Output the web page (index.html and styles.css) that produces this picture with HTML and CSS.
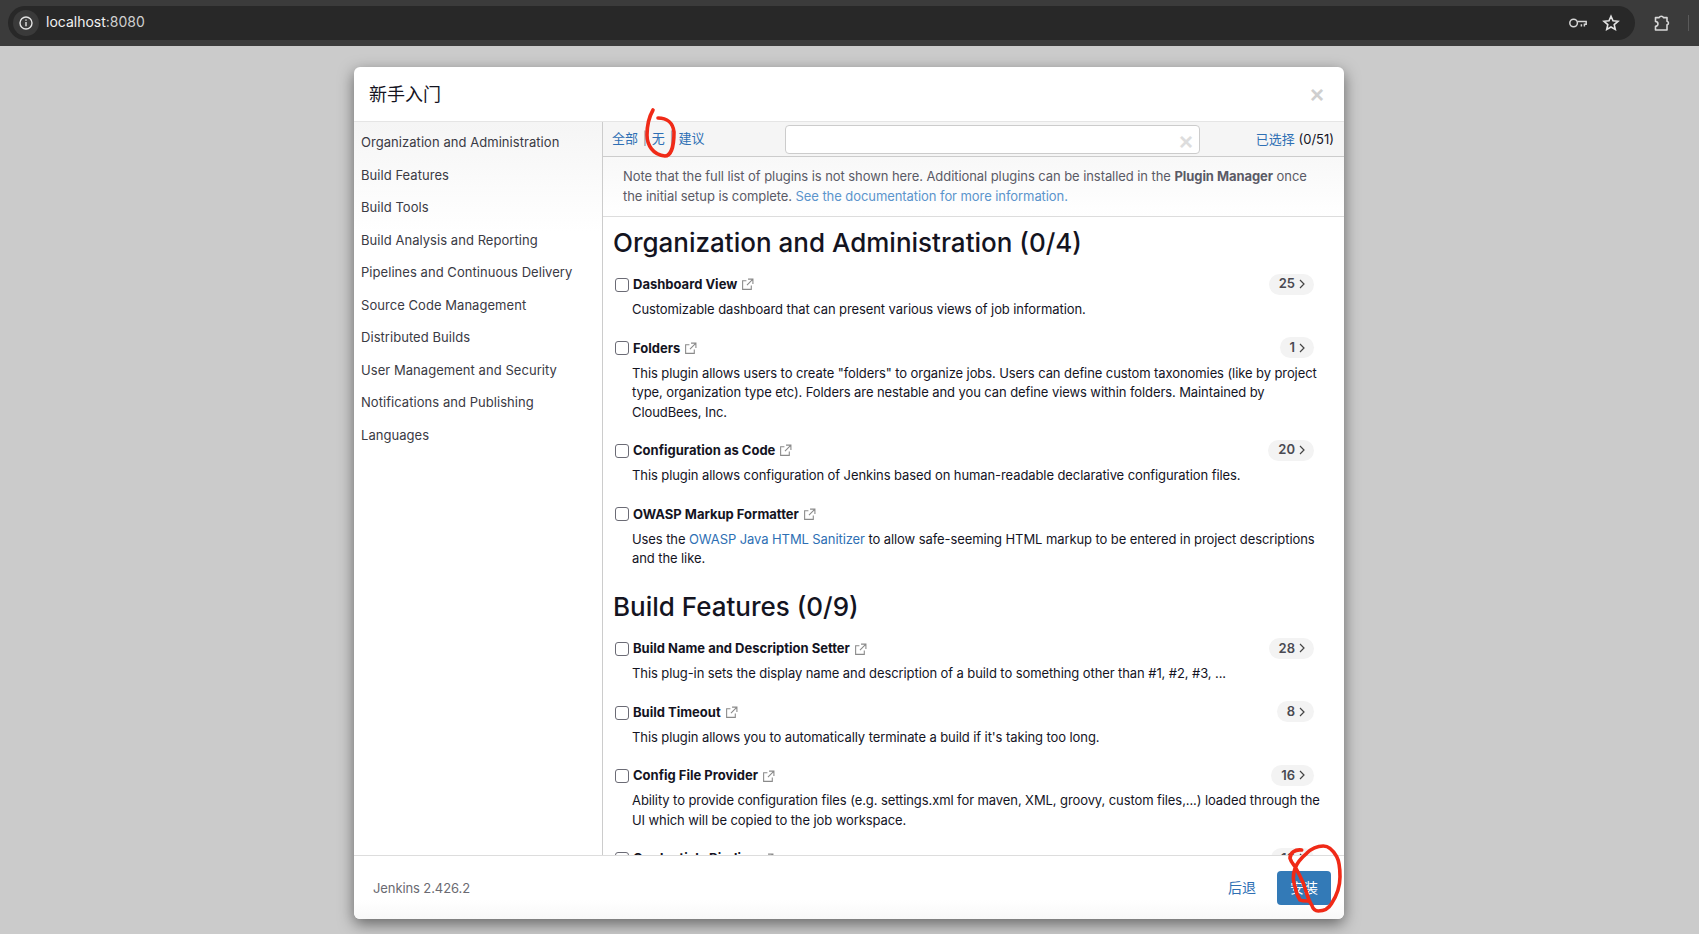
FILE: index.html
```html
<!doctype html>
<html lang="zh">
<head>
    <meta charset="UTF-8">
    <title>Jenkins</title>
    <link rel="stylesheet" href="styles.css">
</head>
<body>
<div class="toolbar">
    <div class="omnibox">
        <span class="site-info">
            <svg width="14" height="14" viewBox="0 0 14 14" fill="none" stroke="#e3e3e3" stroke-width="1.4"><circle cx="7" cy="7" r="6"/><path d="M7 6v4.2M7 3.4v1.4"/></svg>
        </span>
        <span class="url"><b>localhost</b>:8080</span>
        <svg class="key" width="18" height="12" viewBox="0 0 18 12" fill="none" stroke="#d5d5d5" stroke-width="1.5"><circle cx="4.6" cy="6" r="3.8"/><path d="M8.4 4.6H17.2V7.2H15.4V9.4M12.4 7.2V9.4"/></svg>
        <svg class="star" width="18" height="18" viewBox="0 0 18 18" fill="none" stroke="#e3e3e3" stroke-width="1.6"><path d="M9 2.2l2 4.6 5 .5-3.8 3.3 1.1 4.9L9 13l-4.3 2.5 1.1-4.9L2 7.3l5-.5z"/></svg>
    </div>
    <svg class="ext" width="18" height="18" viewBox="0 0 18 18" fill="none" stroke="#d8d8d8" stroke-width="1.6" stroke-linejoin="round"><path d="M2.5 3.6H6.2a2.2 2 0 0 1 4.2 0h3.6v3.6a1.9 1.9 0 0 1 0 3.7V16H2.5v-3.6a2.4 2.4 0 0 0 0-4.9z"/></svg>
    <span class="tb-sep"></span>
</div>

<div class="backdrop">
    <div class="dialog">
        <header class="dialog-head">
            <h1>新手入门</h1>
            <span class="dialog-close">×</span>
        </header>
        <div class="dialog-body">
            <ul class="cats">
                <li>Organization and Administration</li>
                <li>Build Features</li>
                <li>Build Tools</li>
                <li>Build Analysis and Reporting</li>
                <li>Pipelines and Continuous Delivery</li>
                <li>Source Code Management</li>
                <li>Distributed Builds</li>
                <li>User Management and Security</li>
                <li>Notifications and Publishing</li>
                <li>Languages</li>
            </ul>
            <div class="main">
                <div class="filter">
                    <div class="filter-links"><a>全部</a><i>|</i><a>无</a><i>|</i><a>建议</a></div>
                    <div class="search"><span>×</span></div>
                    <div class="selected"><a>已选择</a> (0/51)</div>
                </div>
                <p class="note">Note that the full list of plugins is not shown here. Additional plugins can be installed in the <b>Plugin Manager</b> once the initial setup is complete. <a>See the documentation for more information.</a></p>
                <div class="plugins">
                    <h2>Organization and Administration (0/4)</h2>

                    <div class="plugin">
                        <div class="plugin-title"><input type="checkbox"><b>Dashboard View</b><svg class="ext-link" viewBox="0 0 12 12"><path d="M9.5 7v3.5h-8v-8H5M6.5 1h4.5v4.5M11 1L5.5 6.5"/></svg><span class="deps">25<svg viewBox="0 0 6 10"><path d="M1 1l4 4-4 4"/></svg></span></div>
                        <p>Customizable dashboard that can present various views of job information.</p>
                    </div>
                    <div class="plugin">
                        <div class="plugin-title"><input type="checkbox"><b>Folders</b><svg class="ext-link" viewBox="0 0 12 12"><path d="M9.5 7v3.5h-8v-8H5M6.5 1h4.5v4.5M11 1L5.5 6.5"/></svg><span class="deps">1<svg viewBox="0 0 6 10"><path d="M1 1l4 4-4 4"/></svg></span></div>
                        <p>This plugin allows users to create "folders" to organize jobs. Users can define custom taxonomies (like by project type, organization type etc). Folders are nestable and you can define views within folders. Maintained by CloudBees, Inc.</p>
                    </div>
                    <div class="plugin">
                        <div class="plugin-title"><input type="checkbox"><b>Configuration as Code</b><svg class="ext-link" viewBox="0 0 12 12"><path d="M9.5 7v3.5h-8v-8H5M6.5 1h4.5v4.5M11 1L5.5 6.5"/></svg><span class="deps">20<svg viewBox="0 0 6 10"><path d="M1 1l4 4-4 4"/></svg></span></div>
                        <p>This plugin allows configuration of Jenkins based on human-readable declarative configuration files.</p>
                    </div>
                    <div class="plugin">
                        <div class="plugin-title"><input type="checkbox"><b>OWASP Markup Formatter</b><svg class="ext-link" viewBox="0 0 12 12"><path d="M9.5 7v3.5h-8v-8H5M6.5 1h4.5v4.5M11 1L5.5 6.5"/></svg></div>
                        <p>Uses the <a>OWASP Java HTML Sanitizer</a> to allow safe-seeming HTML markup to be entered in project descriptions and the like.</p>
                    </div>

                    <h2>Build Features (0/9)</h2>

                    <div class="plugin">
                        <div class="plugin-title"><input type="checkbox"><b>Build Name and Description Setter</b><svg class="ext-link" viewBox="0 0 12 12"><path d="M9.5 7v3.5h-8v-8H5M6.5 1h4.5v4.5M11 1L5.5 6.5"/></svg><span class="deps">28<svg viewBox="0 0 6 10"><path d="M1 1l4 4-4 4"/></svg></span></div>
                        <p>This plug-in sets the display name and description of a build to something other than #1, #2, #3, ...</p>
                    </div>
                    <div class="plugin">
                        <div class="plugin-title"><input type="checkbox"><b>Build Timeout</b><svg class="ext-link" viewBox="0 0 12 12"><path d="M9.5 7v3.5h-8v-8H5M6.5 1h4.5v4.5M11 1L5.5 6.5"/></svg><span class="deps">8<svg viewBox="0 0 6 10"><path d="M1 1l4 4-4 4"/></svg></span></div>
                        <p>This plugin allows you to automatically terminate a build if it's taking too long.</p>
                    </div>
                    <div class="plugin">
                        <div class="plugin-title"><input type="checkbox"><b>Config File Provider</b><svg class="ext-link" viewBox="0 0 12 12"><path d="M9.5 7v3.5h-8v-8H5M6.5 1h4.5v4.5M11 1L5.5 6.5"/></svg><span class="deps">16<svg viewBox="0 0 6 10"><path d="M1 1l4 4-4 4"/></svg></span></div>
                        <p>Ability to provide configuration files (e.g. settings.xml for maven, XML, groovy, custom files,...) loaded through the UI which will be copied to the job workspace.</p>
                    </div>
                    <div class="plugin">
                        <div class="plugin-title"><input type="checkbox"><b>Credentials Binding</b><svg class="ext-link" viewBox="0 0 12 12"><path d="M9.5 7v3.5h-8v-8H5M6.5 1h4.5v4.5M11 1L5.5 6.5"/></svg><span class="deps">10<svg viewBox="0 0 6 10"><path d="M1 1l4 4-4 4"/></svg></span></div>
                    </div>
                </div>
            </div>
        </div>
        <footer class="dialog-foot">
            <span class="version">Jenkins 2.426.2</span>
            <a class="back">后退</a>
            <a class="install">安装</a>
        </footer>

        <!-- red pen marks from the screenshot -->
        <svg class="mark mark-none" viewBox="0 0 40 56" fill="none" stroke="#f02a17" stroke-width="3.6" stroke-linecap="round"><path d="M13 5C9 12 7 20 7 30C7 40 13 50 25 51C32 51 34 38 34 27C33 18 27 13 18 13"/></svg>
        <svg class="mark mark-install" viewBox="0 0 66 76" fill="none" stroke="#f02a17" stroke-width="3.6" stroke-linecap="round"><path d="M21.7 10C15 9 10 13 10 18.3C11 22 13 24 15 26.7C18 32 21 38 23.3 43.3C26 50 28 60 31.7 65C33 69 36 71 38.3 71C45 71 49 68 51.7 63.3C57 55 60 46 60 36.7C60 28 59 21 56.7 16.7C53 10 48 6 43.3 6C36 6 31 9 26.7 13.3C21 18 17 23 15 28.3C13 34 13 41 15 46.7C16 52 18 57 20 60C22 61 25 61 28.3 61"/></svg>
    </div>
</div>
</body>
</html>
```

FILE: styles.css
```css
* {
    padding: 0;
    margin: 0;
    box-sizing: border-box;
}

html, body {
    height: 100%;
    overflow: hidden;
}

body {
    background: #cbcbcb;
    font-family: Inter, "Noto Sans CJK SC", sans-serif;
    font-size: 13px;
    line-height: 19.5px;
    color: #14141f;
}

a {
    color: #2e6fb4;
}

/* browser chrome */
.toolbar {
    height: 46px;
    background: #3b3b3b;
    display: flex;
    align-items: center;
    padding: 0 0 0 8px;
}

.omnibox {
    width: 1627px;
    height: 34px;
    border-radius: 17px;
    background: #282828;
    display: flex;
    align-items: center;
    padding: 0 15px 0 5px;
    color: #d0d0d0;
    font-size: 14px;
}

.site-info {
    width: 26px;
    height: 26px;
    border-radius: 50%;
    background: #3a3a3a;
    display: flex;
    align-items: center;
    justify-content: center;
    margin-right: 7px;
}

.url {
    padding-bottom: 2px;
}

.url b {
    font-weight: normal;
    color: #f1f1f1;
}

.key {
    margin-left: auto;
    margin-right: 15px;
}

.ext {
    margin-left: 18px;
}

.tb-sep {
    width: 1px;
    height: 16px;
    background: #5a5a5a;
    margin-left: 17px;
}

/* dialog */
.backdrop {
    padding: 21px 0 0 354px;
}

.dialog {
    position: relative;
    width: 990px;
    height: 852px;
    background: #fff;
    border-radius: 6px;
    box-shadow: 0 5px 15px rgba(0, 0, 0, .5);
    display: flex;
    flex-direction: column;
    overflow: hidden;
}

.dialog-head {
    height: 55px;
    flex: none;
    display: flex;
    align-items: center;
    justify-content: space-between;
    padding: 2px 20px 0 15px;
    border-bottom: 1px solid #e5e5e5;
}

.dialog-head h1 {
    font-size: 18px;
    font-weight: 400;
}

.dialog-close {
    font-size: 24px;
    font-weight: 700;
    color: #cfcfcf;
    font-family: "Liberation Sans", sans-serif;
}

.dialog-body {
    flex: 1;
    display: flex;
    min-height: 0;
}

.cats {
    width: 249px;
    flex: none;
    list-style: none;
    padding-top: 4px;
    border-right: 1px solid #ccc;
    background: linear-gradient(#f5f5f5, #fff 110px);
    color: #3a3a44;
    letter-spacing: .05px;
}

.cats li {
    height: 32.5px;
    padding-left: 7px;
    line-height: 32.5px;
}

.main {
    flex: 1;
    min-width: 0;
    display: flex;
    flex-direction: column;
}

.filter {
    height: 35px;
    flex: none;
    display: flex;
    align-items: center;
    padding: 0 10px 0 9px;
    background: #f5f5f5;
    border-bottom: 1px solid #ccc;
}

.filter-links {
    width: 173px;
}

.filter-links i {
    font-style: normal;
    color: #7f8ea0;
    margin: 0 4.7px;
}

.search {
    width: 415px;
    height: 29px;
    background: #fff;
    border: 1px solid #ccc;
    border-radius: 4px;
    text-align: right;
    padding-right: 6px;
}

.search span {
    font: 700 24px/31px "Liberation Sans", sans-serif;
    color: #ddd;
}

.selected {
    margin-left: auto;
    padding-top: 1px;
}

.note {
    height: 60px;
    flex: none;
    padding: 10px 20px;
    color: #5a5a66;
    background: linear-gradient(#f8f8f8, #fff);
    border-bottom: 1px solid #ddd;
    letter-spacing: -.07px;
}

.note a {
    color: #5b94cc;
}

.plugins {
    flex: 1;
    min-height: 0;
    overflow: hidden;
    padding: 1px 20px 0 10px;
}

.plugins h2 {
    font-size: 26px;
    line-height: 34px;
    font-weight: 500;
    padding-top: 8px;
    height: 50px;
    margin-bottom: 1.7px;
}

.plugin {
    position: relative;
    margin-bottom: 13.5px;
}

.plugin-title {
    display: flex;
    align-items: center;
    height: 30.5px;
}

.plugin-title input {
    appearance: none;
    width: 14px;
    height: 14px;
    margin: 0 4px 0 2px;
    background: #fff;
    border: 1px solid #6b6b75;
    border-radius: 3px;
}

.plugin p {
    padding-left: 19px;
    letter-spacing: -.09px;
}

.ext-link {
    width: 13px;
    height: 13px;
    margin-left: 4px;
    fill: none;
    stroke: #8a8a8a;
}

.deps {
    position: absolute;
    right: 10px;
    top: 4px;
    height: 21px;
    padding: 0 9px 0 10px;
    border-radius: 11px;
    background: #f3f3f3;
    font-weight: 600;
    color: #4a4a52;
    display: flex;
    align-items: center;
    gap: 4px;
}

.deps svg {
    width: 6px;
    height: 10px;
    fill: none;
    stroke: #444;
    stroke-width: 1.2;
}

.dialog-foot {
    height: 64px;
    flex: none;
    display: flex;
    align-items: center;
    padding: 0 13px 0 19px;
    border-top: 1px solid #ddd;
    background: linear-gradient(#fff 70%, #f8f8f8);
}

.version {
    color: #6a6a72;
    letter-spacing: -.1px;
    padding-top: 2px;
}

.back {
    margin-left: auto;
    font-size: 14px;
}

.install {
    margin-left: 21px;
    width: 54px;
    height: 34px;
    line-height: 33px;
    text-align: center;
    background: #337ab7;
    color: #fff;
    border-radius: 4px;
    font-size: 14px;
}

/* pen marks sit on top of everything */
.mark {
    position: absolute;
}

.mark-none {
    left: 286px;
    top: 38px;
    width: 40px;
    height: 56px;
}

.mark-install {
    left: 926px;
    top: 773px;
    width: 66px;
    height: 76px;
}
```
